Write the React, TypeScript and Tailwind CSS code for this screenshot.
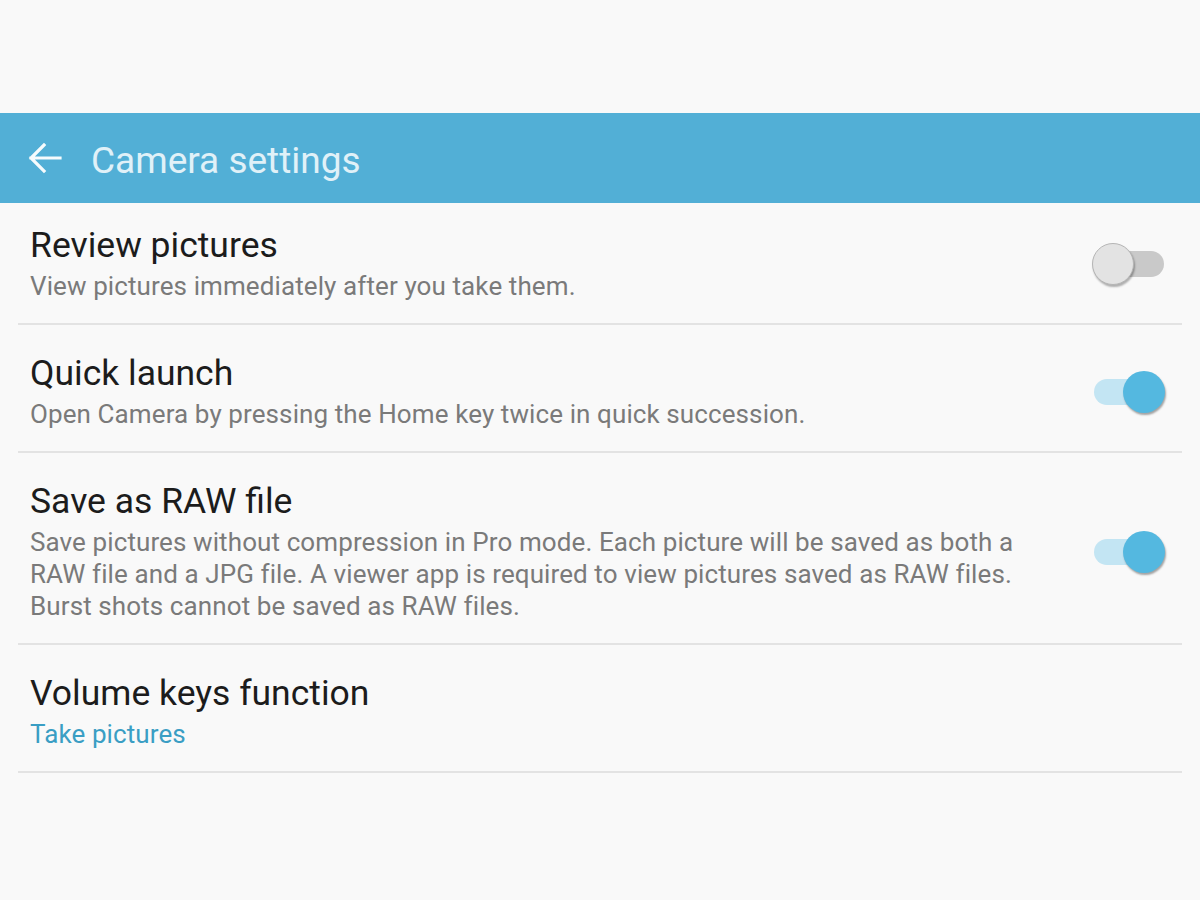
type Row = {
  title: string;
  desc: string;
  toggle?: boolean;
  on?: boolean;
  link?: boolean;
  first?: boolean;
};

const rows: Row[] = [
  { title: 'Review pictures', desc: 'View pictures immediately after you take them.', toggle: true, on: false, first: true },
  { title: 'Quick launch', desc: 'Open Camera by pressing the Home key twice in quick succession.', toggle: true, on: true },
  {
    title: 'Save as RAW file',
    desc: 'Save pictures without compression in Pro mode. Each picture will be saved as both a RAW file and a JPG file. A viewer app is required to view pictures saved as RAW files. Burst shots cannot be saved as RAW files.',
    toggle: true,
    on: true,
  },
  { title: 'Volume keys function', desc: 'Take pictures', link: true },
];

function Switch({ on }: { on: boolean }) {
  return (
    <div className="relative w-[74px] h-[44px] shrink-0">
      <div className={`absolute left-[2px] top-[9px] w-[70px] h-[26px] rounded-full ${on ? 'bg-[#c3e5f3]' : 'bg-[#c9c9c9]'}`} />
      <div
        className={`absolute top-[1px] w-[42px] h-[42px] rounded-full ${
          on
            ? 'left-[31px] bg-[#54b8e0] shadow-[1px_2px_2px_rgba(0,0,0,0.35)]'
            : 'left-[0px] bg-[#e3e3e3] border border-[#b5b5b5] shadow-[1px_2px_2px_rgba(0,0,0,0.3)]'
        }`}
      />
    </div>
  );
}

export default function App() {
  return (
    <div className="w-[1200px] h-[900px] bg-[#f9f9f9] font-['Roboto',sans-serif]">
      <div className="h-[113px]" />
      <div className="h-[90px] bg-[#52afd6] flex items-center pl-[28px]">
        <svg width="34" height="34" viewBox="0 0 34 34" fill="none" stroke="#f6fbfd" strokeWidth="3.2" strokeLinecap="square">
          <path d="M3 17H32M16 4L3 17L16 30" />
        </svg>
        <span className="ml-[29px] mt-[5px] text-[37px] leading-[44px] text-[#e0f1f8]">Camera settings</span>
      </div>
      <div className="px-[18px]">
        {rows.map((r) => (
          <div
            key={r.title}
            className={`flex items-center border-b-2 border-[#e3e3e3] pb-[21px] ${r.first ? 'pt-[22px]' : 'pt-[28px]'}`}
          >
            <div className="flex-1 pl-[12px] pr-[50px]">
              <div className="text-[35.5px] leading-[40px] text-[#1c1c1c]">{r.title}</div>
              <div
                className={`mt-[5px] text-[26px] leading-[32px] tracking-[0.1px] ${r.link ? 'text-[#3a9ec4]' : 'text-[#7a7a7a]'}`}
              >
                {r.desc}
              </div>
            </div>
            {r.toggle && (
              <div className="pr-[16px]">
                <Switch on={!!r.on} />
              </div>
            )}
          </div>
        ))}
      </div>
    </div>
  );
}
